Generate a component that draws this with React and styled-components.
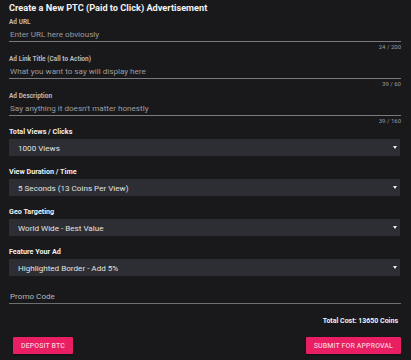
import styled, { createGlobalStyle } from 'styled-components';

const GlobalStyle = createGlobalStyle`
  html, body {
    margin: 0;
    padding: 0;
    background: #19191c;
  }
  body {
    font-family: Roboto, "Liberation Sans", sans-serif;
  }
`;

const textFields = [
  { label: 'Ad URL', placeholder: 'Enter URL here obviously', counter: '24 / 200' },
  {
    label: 'Ad Link Title (Call to Action)',
    placeholder: 'What you want to say will display here',
    counter: '39 / 60',
  },
  {
    label: 'Ad Description',
    placeholder: "Say anything it doesn't matter honestly",
    counter: '39 / 160',
  },
];

const selects = [
  { label: 'Total Views / Clicks', value: '1000 Views' },
  { label: 'View Duration / Time', value: '5 Seconds (13 Coins Per View)' },
  { label: 'Geo Targeting', value: 'World Wide - Best Value' },
  { label: 'Feature Your Ad', value: 'Highlighted Border - Add 5%' },
];

function App() {
  return (
    <Page>
      <GlobalStyle />
      <Title>Create a New PTC (Paid to Click) Advertisement</Title>

      <TextFields>
        {textFields.map(field => (
          <Field key={field.label}>
            <FieldLabel>{field.label}</FieldLabel>
            <LineInput placeholder={field.placeholder} readOnly />
            <Counter>{field.counter}</Counter>
          </Field>
        ))}
      </TextFields>

      <SelectList>
        {selects.map(item => (
          <SelectGroup key={item.label}>
            <SelectLabel>{item.label}</SelectLabel>
            <SelectBox>
              <span>{item.value}</span>
              <Arrow />
            </SelectBox>
          </SelectGroup>
        ))}
      </SelectList>

      <PromoInput placeholder="Promo Code" readOnly />

      <TotalCost>Total Cost: 13650 Coins</TotalCost>

      <Actions>
        <PinkButton $offset="4px">Deposit BTC</PinkButton>
        <PinkButton $wide>Submit for Approval</PinkButton>
      </Actions>
    </Page>
  );
}

export default App;

const Page = styled.div`
  width: 411px;
  height: 360px;
  box-sizing: border-box;
  padding: 1px 10px 0 9px;
  background: #19191c;
  overflow: hidden;
`;

const Title = styled.h1`
  margin: 0;
  font-size: 9.2px;
  line-height: 14px;
  font-weight: 700;
  color: #f2f2f2;
`;

const TextFields = styled.div`
  display: flex;
  flex-direction: column;
  gap: 4px;
  margin-top: 3px;
`;

const Field = styled.div`
  display: flex;
  flex-direction: column;
`;

const FieldLabel = styled.label`
  font-size: 6.5px;
  line-height: 9px;
  font-weight: 700;
  color: #b9b9b9;
`;

const LineInput = styled.input`
  display: block;
  width: 100%;
  height: 15px;
  box-sizing: border-box;
  padding: 0 0 0 1px;
  margin: 0;
  border: none;
  border-bottom: 1px solid #7a7a7e;
  background: transparent;
  font-family: inherit;
  font-size: 8.1px;
  color: #e0e0e0;
  outline: none;

  &::placeholder {
    color: #9c9c9f;
  }
`;

const Counter = styled.div`
  margin-top: 1px;
  font-size: 6px;
  line-height: 8px;
  color: #9a9a9d;
  text-align: right;
`;

const SelectList = styled.div`
  display: flex;
  flex-direction: column;
  gap: 11px;
  margin-top: 2px;
`;

const SelectGroup = styled.div`
  display: flex;
  flex-direction: column;
  gap: 2px;
`;

const SelectLabel = styled.div`
  font-size: 7.2px;
  line-height: 10px;
  font-weight: 700;
  color: #f0f0f0;
`;

const SelectBox = styled.div`
  display: flex;
  align-items: center;
  justify-content: space-between;
  height: 17px;
  padding: 0 3px 0 9px;
  margin-right: 1.5px;
  background: #2c2e33;
  font-size: 8.1px;
  color: #e2e2e2;
`;

const Arrow = styled.span`
  width: 0;
  height: 0;
  border-left: 2.5px solid transparent;
  border-right: 2.5px solid transparent;
  border-top: 3.5px solid #f2f2f2;
`;

const PromoInput = styled(LineInput)`
  margin-top: 13px;
  height: 15px;
  border-bottom-color: #6e6e72;

  &::placeholder {
    color: #b7b7ba;
  }
`;

const TotalCost = styled.div`
  margin-top: 12px;
  padding-right: 3px;
  font-size: 7px;
  line-height: 10px;
  font-weight: 700;
  color: #f0f0f0;
  text-align: right;
`;

const Actions = styled.div`
  display: flex;
  justify-content: space-between;
  align-items: center;
  margin-top: 11px;
`;

const PinkButton = styled.button`
  height: 17px;
  min-width: ${props => (props.$wide ? '95px' : '59px')};
  margin-left: ${props => props.$offset || '0'};
  padding: 0 8px;
  border: none;
  border-radius: 1px;
  background: #e91e63;
  box-shadow: 0 1px 2px rgba(0, 0, 0, 0.4);
  font-family: inherit;
  font-size: 7px;
  font-weight: 500;
  letter-spacing: 0.1px;
  text-transform: uppercase;
  color: #f8c9d9;
  cursor: pointer;
`;
